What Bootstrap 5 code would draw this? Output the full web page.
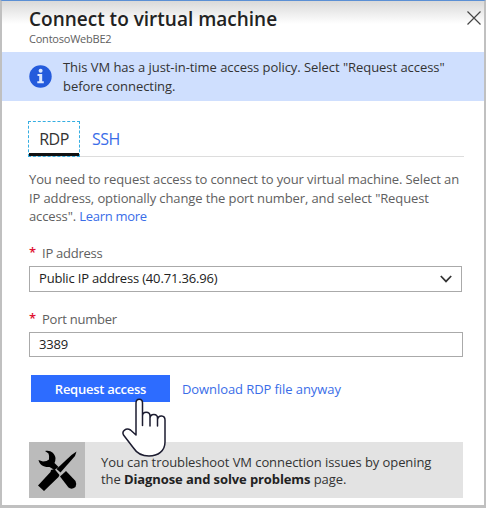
<!DOCTYPE html>
<html lang="en">
<head>
<meta charset="utf-8">
<meta name="viewport" content="width=device-width, initial-scale=1">
<title>Connect to virtual machine</title>
<link href="https://cdn.jsdelivr.net/npm/bootstrap@5.3.0/dist/css/bootstrap.min.css" rel="stylesheet">
<style>
  body { font-family: "Open Sans", "Noto Sans", sans-serif; font-size: 13px; color: #606060; background: #fff; }
  .blade { width: 486px; height: 508px; border: solid #c0c0c0; border-width: 0 2px 3px 2px; border-top: 1px solid #5b8fd4; background: linear-gradient(#d9d9d9, #fff 23px); }
  .blade-head { height: 51px; padding: 6px 2px 0 27px; }
  .blade-title { font-size: 19px; line-height: 24px; font-weight: 600; color: #222; letter-spacing: 0; white-space: nowrap; }
  .blade-sub { font-size: 11px; line-height: 15px; letter-spacing: -.22px; }
  .close-x { width: 16px; height: 16px; margin-top: 3px; }
  .info-bar { height: 49px; background: #cfdffe; color: #333; padding: 0 0 0 27px; }
  .ln { display: block; white-space: nowrap; }
  .info-text { line-height: 19px; margin: 6px 0 0 11px; letter-spacing: -.05px; }
  .info-icon { width: 23px; height: 23px; margin-top: 13px; }
  .content { padding: 0 20px 0 27px; }
  .tabs { height: 36px; margin-top: 20px; font-size: 16px; line-height: 36px; box-shadow: inset 0 -1px #ddd; }
  .tab-on { width: 52px; margin-left: -1px; border: 1px dashed #35aee2; color: #333; line-height: 34px; letter-spacing: -.5px; }
  .tab-on::after { content: ""; display: block; height: 3px; margin-top: -3px; background: #111; }
  .tab-off { margin-left: 12px; letter-spacing: -.5px; }
  .lk { color: #3a6de8; text-decoration: none; }
  .intro { line-height: 18.7px; margin-top: 13px; letter-spacing: -.11px; height: 57px; }
  .intro .lk { letter-spacing: -.3px; }
  .label-ip { margin-top: 17px; }
  .label-port { margin-top: 18px; }
  .field-label { line-height: 18px; letter-spacing: -.25px; }
  .req { color: #e01030; width: 13px; font-weight: 600; line-height: 17px; }
  .box { border: 1px solid #aaa; border-radius: 0; color: #222; padding: 0 9px; margin-top: 4px; }
  .box-select { width: 433px; height: 26px; letter-spacing: -.17px; }
  .box-input { width: 434px; height: 25px; letter-spacing: -.2px; }
  .actions { margin-top: 18px; }
  .btn-req { width: 139px; height: 27px; margin-left: 2px; background: #2d6cff; color: #fff; border: 0; border-radius: 0; font-size: 13px; font-weight: 600; line-height: 28px; padding: 0; letter-spacing: -.27px; }
  .dl { margin-left: 12px; letter-spacing: -.08px; padding-top: 2px; }
  .tip { height: 56px; width: 434px; background: #e3e3e3; color: #333; margin-top: 40px; }
  .tip-icon { width: 56px; height: 56px; background: #bbb; }
  .tip-text { line-height: 16.5px; margin: 12px 0 0 16px; letter-spacing: -.08px; }
  .tip-text b { color: #222; font-weight: 700; letter-spacing: -.1px; }
  .pointer { left: 119px; top: 396px; width: 48px; height: 62px; }
</style>
<script src="https://cdn.jsdelivr.net/npm/bootstrap@5.3.0/dist/js/bootstrap.bundle.min.js"></script>
</head>
<body class="m-0 overflow-hidden">
<main class="blade position-relative">
  <header class="blade-head d-flex justify-content-between">
    <div>
      <h1 class="blade-title m-0">Connect to virtual machine</h1>
      <div class="blade-sub">ContosoWebBE2</div>
    </div>
    <svg class="close-x" viewBox="0 0 16 16"><path d="M1.500 1.500 14.500 14.500M14.500 1.500 1.500 14.500" stroke="#444" stroke-width="1.2"/></svg>
  </header>
  <div class="info-bar d-flex">
    <svg class="info-icon" viewBox="0 0 23 23"><circle cx="11.5" cy="11.5" r="11.2" fill="#245bdc"/><path d="M8.500 9H13.200V16.300H14.800V18.300H8.300V16.300H10.200V11H8.500Z" fill="#dce8ff"/><circle cx="11.600" cy="5.800" r="2" fill="#dce8ff"/></svg>
    <div class="info-text"><span class="ln">This VM has a just-in-time access policy. Select "Request access"</span><span class="ln">before connecting.</span></div>
  </div>
  <section class="content">
    <nav class="tabs d-flex">
      <div class="tab-on text-center">RDP</div>
      <a class="tab-off lk" href="#">SSH</a>
    </nav>
    <p class="intro mb-0"><span class="ln">You need to request access to connect to your virtual machine. Select an</span><span class="ln">IP address, optionally change the port number, and select "Request</span><span class="ln">access". <a class="lk" href="#">Learn more</a></span></p>
    <div class="field-label label-ip d-flex"><span class="req">*</span><span>IP address</span></div>
    <div class="box box-select d-flex align-items-center justify-content-between"><span>Public IP address (40.71.36.96)</span>
      <svg width="12" height="8" viewBox="0 0 12 8"><path d="M.8 1 6 6.400 11.200 1" fill="none" stroke="#333" stroke-width="1.7"/></svg></div>
    <div class="field-label label-port d-flex"><span class="req">*</span><span>Port number</span></div>
    <div class="box box-input d-flex align-items-center">3389</div>
    <div class="actions d-flex align-items-center">
      <button class="btn btn-req" type="button">Request access</button>
      <a class="dl lk" href="#">Download RDP file anyway</a>
    </div>
    <div class="tip d-flex">
      <div class="tip-icon">
        <svg width="56" height="56" viewBox="0 0 56 56">
          <path d="M16 9C21 7.500 26 11 26.500 16Q26.500 19 25.500 21L29.500 25 25.500 28 20.500 25C15 25.500 10.500 23 9.500 18L14 19.500Q18 19.500 20 17.500 20.500 14 19.500 11.500Z"/>
          <path d="M31 34.500 37 29 46.500 39Q48 42 46.500 45 42.500 48 39.500 45.500Z"/>
          <path d="M47.500 9.500 46 14 31.500 30.500 27.500 27 42.500 13Z"/>
          <path d="M22 28 25.500 27 30.500 33 29.500 35 15 49 9 43.500 21.500 30Z"/>
        </svg>
      </div>
      <div class="tip-text"><span class="ln">You can troubleshoot VM connection issues by opening</span><span class="ln">the <b>Diagnose and solve problems</b> page.</span></div>
    </div>
  </section>
  <svg class="pointer position-absolute" viewBox="121 397 48 62">
    <path d="M136 435V403C136 398 142.500 398 142.500 403V425.500V416C142.500 411 150 411 150 416V426V418C150.500 413 157.500 413.500 157.500 418V426V419.500C158.500 414.500 165 415 165 420V442C165 451 158 456 149 456C141 456 137 453.500 133.500 448L123.500 435C121.500 431 126 427.500 130.500 430Z" fill="#fff" stroke="#1c1c30" stroke-width="1.5" stroke-linejoin="round"/>
  </svg>
</main>
</body>
</html>
